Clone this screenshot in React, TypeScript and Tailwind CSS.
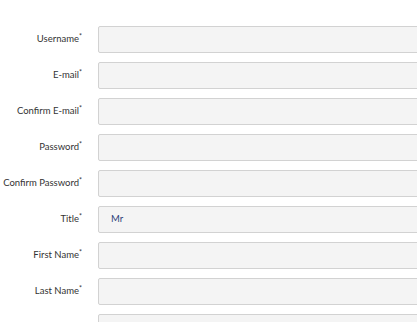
import React from "react";

const fields = [
  { label: "Username", value: "" },
  { label: "E-mail", value: "" },
  { label: "Confirm E-mail", value: "" },
  { label: "Password", value: "" },
  { label: "Confirm Password", value: "" },
  { label: "Title", value: "Mr" },
  { label: "First Name", value: "" },
  { label: "Last Name", value: "" },
  { label: "", value: "" },
];

export default function App() {
  return (
    <div className="w-[417px] h-[322px] overflow-hidden bg-white" style={{ fontFamily: "Lato, 'Open Sans', sans-serif" }}>
      <div className="flex flex-col gap-[9px] pt-[26px]">
        {fields.map((f, i) => (
          <div key={i} className="flex items-center">
            <div className="w-[82px] shrink-0 flex justify-end whitespace-nowrap text-[9.5px] leading-none text-[#333333]">
              {f.label && (
                <span className="relative top-[-1px]">
                  {f.label}
                  <span className="relative top-[-3px] text-[7px]">*</span>
                </span>
              )}
            </div>
            <div className="ml-[16px] w-[340px] shrink-0 h-[27px] border border-[#d2d2d2] bg-[#f4f4f4] rounded-[2px] flex items-center pl-[12px] text-[9.5px] text-[#2d3f7a]">
              {f.value}
            </div>
          </div>
        ))}
      </div>
    </div>
  );
}
